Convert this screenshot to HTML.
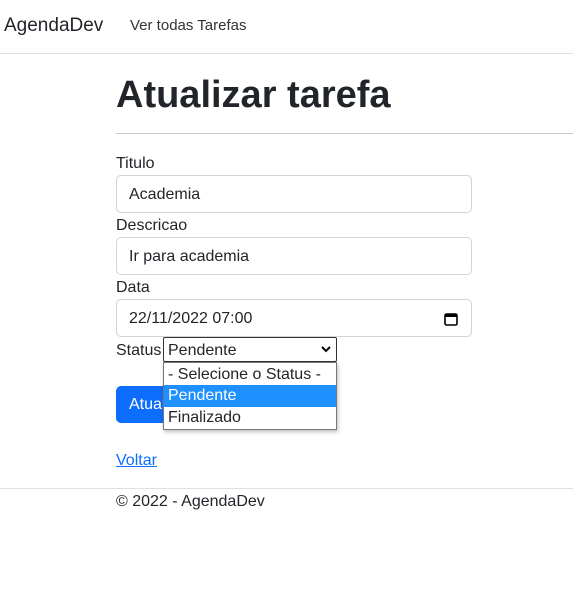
<!DOCTYPE html>
<html><head><style>
body{margin:0;width:573px;height:601px;background:#fff;font-family:"Liberation Sans",sans-serif;color:#212529;position:relative;overflow:hidden}
.a{position:absolute;white-space:nowrap}
.inp{position:absolute;left:116px;width:356px;height:38px;border:1px solid #ced4da;border-radius:5px;box-sizing:border-box;font-size:16px;line-height:38px;padding-left:12px}
</style></head><body>
<div class="a" style="left:4px;top:15px;font-size:19px">AgendaDev</div>
<div class="a" style="left:130px;top:17px;font-size:15px;color:#333">Ver todas Tarefas</div>
<div class="a" style="left:0;top:53px;width:573px;height:1px;background:#e0e0e0"></div>
<div class="a" style="left:116px;top:74px;font-size:38px;font-weight:bold">Atualizar tarefa</div>
<div class="a" style="left:116px;top:133px;width:457px;height:1px;background:#c8c8c8"></div>
<div class="a" style="left:116px;top:155px;font-size:16px">Titulo</div>
<div class="inp" style="top:175px">Academia</div>
<div class="a" style="left:116px;top:217px;font-size:16px">Descricao</div>
<div class="inp" style="top:237px">Ir para academia</div>
<div class="a" style="left:116px;top:279px;font-size:16px">Data</div>
<div class="inp" style="top:299px">22/11/2022 07:00
<svg style="position:absolute;right:13px;top:12px" width="14" height="14" viewBox="0 0 14 14"><rect x="1" y="2" width="12" height="11" rx="1.5" fill="none" stroke="#000" stroke-width="1.6"/><rect x="1" y="2" width="12" height="3" fill="#000"/></svg></div>
<div class="a" style="left:116px;top:342px;font-size:16px">Status</div>
<div class="a" style="left:163px;top:337px;width:174px;height:25px;border:1px solid #333;box-sizing:border-box;border-radius:2px;font-size:16px;line-height:25px;padding-left:4px">Pendente
<svg style="position:absolute;right:5px;top:8px" width="10" height="7" viewBox="0 0 10 7"><path d="M1 1 L5 5 L9 1" fill="none" stroke="#000" stroke-width="2"/></svg></div>
<div class="a" style="left:116px;top:386px;width:100px;height:37px;background:#0d6efd;border-radius:5px;color:#fff;font-size:16px;line-height:37px;padding-left:13px;box-sizing:border-box">Atualizar</div>
<div class="a" style="left:163px;top:362px;width:174px;height:68px;border:1px solid #767676;background:#fff;box-sizing:border-box;box-shadow:1px 2px 4px rgba(0,0,0,.25);font-size:16px;line-height:22px">
<div style="padding-left:4px;padding-top:1px;height:21px">- Selecione o Status -</div>
<div style="padding-left:4px;background:#1e90ff;color:#fff">Pendente</div>
<div style="padding-left:4px">Finalizado</div></div>
<div class="a" style="left:116px;top:452px;font-size:16px;color:#0d6efd;text-decoration:underline">Voltar</div>
<div class="a" style="left:0;top:488px;width:573px;height:1px;background:#e0e0e0"></div>
<div class="a" style="left:116px;top:493px;font-size:16px">© 2022 - AgendaDev</div>
</body></html>
